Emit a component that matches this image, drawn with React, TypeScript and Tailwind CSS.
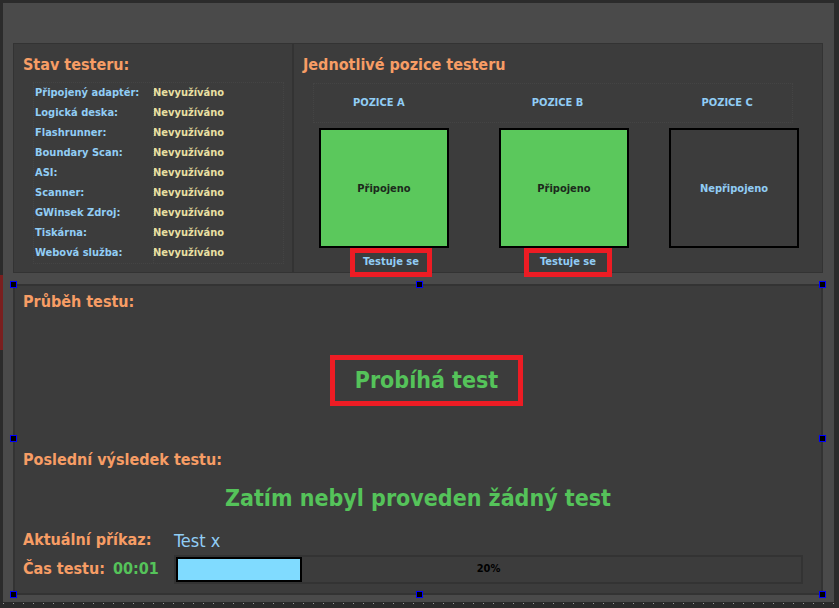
import React from "react";

const rows: [string, string][] = [
  ["Připojený adaptér:", "Nevyužíváno"],
  ["Logická deska:", "Nevyužíváno"],
  ["Flashrunner:", "Nevyužíváno"],
  ["Boundary Scan:", "Nevyužíváno"],
  ["ASI:", "Nevyužíváno"],
  ["Scanner:", "Nevyužíváno"],
  ["GWinsek Zdroj:", "Nevyužíváno"],
  ["Tiskárna:", "Nevyužíváno"],
  ["Webová služba:", "Nevyužíváno"],
];

const Handle = ({ className }: { className: string }) => (
  <div className={`absolute w-[7px] h-[7px] border border-[#0000ff] bg-black ${className}`} />
);

const Slot = ({ ok, label }: { ok: boolean; label: string }) => (
  <div
    className={`w-[130px] h-[120px] border-2 border-black flex items-center justify-center pt-[3px] text-[11px] font-bold ${
      ok ? "bg-[#5bc85c] text-[#1c2a1c]" : "bg-[#3c3c3c] text-[#91cdf5]"
    }`}
  >
    {label}
  </div>
);

const Testing = ({ w }: { w: string }) => (
  <div className={`${w} h-[29px] border-[5px] border-[#ed1c24] flex items-center justify-center text-[11px] font-bold text-[#91cdf5]`}>
    Testuje se
  </div>
);

export default function App() {
  return (
    <div className="w-[839px] h-[608px] bg-[#2b2b2b] flex font-['DejaVu_Sans_Condensed','DejaVu_Sans',sans-serif] overflow-hidden">
      <div className="w-[3px] flex flex-col">
        <div className="h-[275px]" />
        <div className="h-[75px] bg-[#7a1f1f]" />
      </div>
      <div className="flex flex-col w-[831px]">
        <div className="h-[3px]" />
        <div className="h-[599px] bg-[#4a4a4a] pl-[10px] pt-[40px]">
          {/* top panel */}
          <div className="w-[810px] h-[230px] flex border border-[#333]">
            <div className="w-[280px] h-full bg-[#3c3c3c] border-r-2 border-[#333] pl-[9px] pt-[11px]">
              <div className="text-[16px] leading-[19px] font-bold text-[#f79d65]">Stav testeru:</div>
              <div className="ml-[10px] mt-[8px] w-[251px] border border-dotted border-[#444] relative">
                <div className="absolute left-[119px] top-0 bottom-0 border-l border-dotted border-[#444]" />
                {rows.map(([k, v]) => (
                  <div key={k} className="h-[20px] flex items-center text-[11px] font-bold">
                    <div className="w-[119px] pl-[1px] text-[#91cdf5]">{k}</div>
                    <div className="text-[#e9e0a3]">{v}</div>
                  </div>
                ))}
              </div>
            </div>
            <div className="flex-1 h-full bg-[#3c3c3c] pl-[9px] pt-[11px]">
              <div className="text-[16px] leading-[19px] font-bold text-[#f79d65]">Jednotlivé pozice testeru</div>
              <div className="ml-[10px] mt-[9px] w-[480px] h-[40px] border border-dotted border-[#444] flex items-center text-[11px] font-bold text-[#91cdf5]">
                <div className="w-[130px] text-center">POZICE A</div>
                <div className="w-[130px] ml-[49px] text-center">POZICE B</div>
                <div className="w-[130px] ml-[40px] text-center">POZICE C</div>
              </div>
              <div className="ml-[16px] mt-[5px] flex gap-[50px]">
                <div className="flex flex-col">
                  <Slot ok label="Připojeno" />
                  <div className="ml-[31px]">
                    <Testing w="w-[82px]" />
                  </div>
                </div>
                <div className="flex flex-col">
                  <Slot ok label="Připojeno" />
                  <div className="ml-[25px]">
                    <Testing w="w-[88px]" />
                  </div>
                </div>
                <div className="-ml-[10px]">
                  <Slot ok={false} label="Nepřipojeno" />
                </div>
              </div>
            </div>
          </div>
          {/* bottom panel */}
          <div className="relative mt-[11px] w-[810px] h-[311px] bg-[#3c3c3c] border-2 border-[#333] pl-[8px] pt-[6px]">
            <Handle className="-left-[5px] -top-[5px]" />
            <Handle className="left-[401px] -top-[5px]" />
            <Handle className="-right-[5px] -top-[5px]" />
            <Handle className="-left-[5px] top-[149px]" />
            <Handle className="-right-[5px] top-[149px]" />
            <Handle className="-left-[5px] -bottom-[5px]" />
            <Handle className="left-[401px] -bottom-[5px]" />
            <Handle className="-right-[5px] -bottom-[5px]" />
            <div className="text-[16px] leading-[19px] font-bold text-[#f79d65]">Průběh testu:</div>
            <div className="mt-[44px] ml-[307px] w-[193px] h-[51px] border-[5px] border-[#ed1c24] flex items-center justify-center text-[23px] font-bold text-[#55c35a]">
              Probíhá test
            </div>
            <div className="mt-[44px] text-[16px] leading-[19px] font-bold text-[#f79d65]">Poslední výsledek testu:</div>
            <div className="mt-[14px] -ml-[8px] text-center text-[23px] leading-[30px] font-bold text-[#55c35a]">
              Zatím nebyl proveden žádný test
            </div>
            <div className="mt-[16px] flex items-center h-[22px]">
              <div className="w-[151px] text-[16px] font-bold text-[#f79d65]">Aktuální příkaz:</div>
              <div className="text-[18px] text-[#91cdf5]">Test x</div>
            </div>
            <div className="mt-[3px] flex items-center h-[30px]">
              <div className="w-[90px] text-[16px] font-bold text-[#f79d65]">Čas testu:</div>
              <div className="w-[61px] text-[16px] font-bold text-[#55c35a]">00:01</div>
              <div className="w-[629px] h-[29px] border-2 border-[#333] relative flex items-center">
                <div className="absolute left-0 top-0 w-[126px] h-[25px] bg-[#80dbff] border-2 border-black" />
                <div className="relative w-full text-center text-[11px] font-bold text-black">20%</div>
              </div>
            </div>
          </div>
        </div>
        <div className="h-[6px] flex items-start pt-[1px] gap-[9px]">
          {Array.from({ length: 84 }).map((_, i) => (
            <div key={i} className="w-[1px] h-[1px] shrink-0 bg-[#9a9a9a]" />
          ))}
        </div>
      </div>
      <div className="w-[5px]" />
    </div>
  );
}
